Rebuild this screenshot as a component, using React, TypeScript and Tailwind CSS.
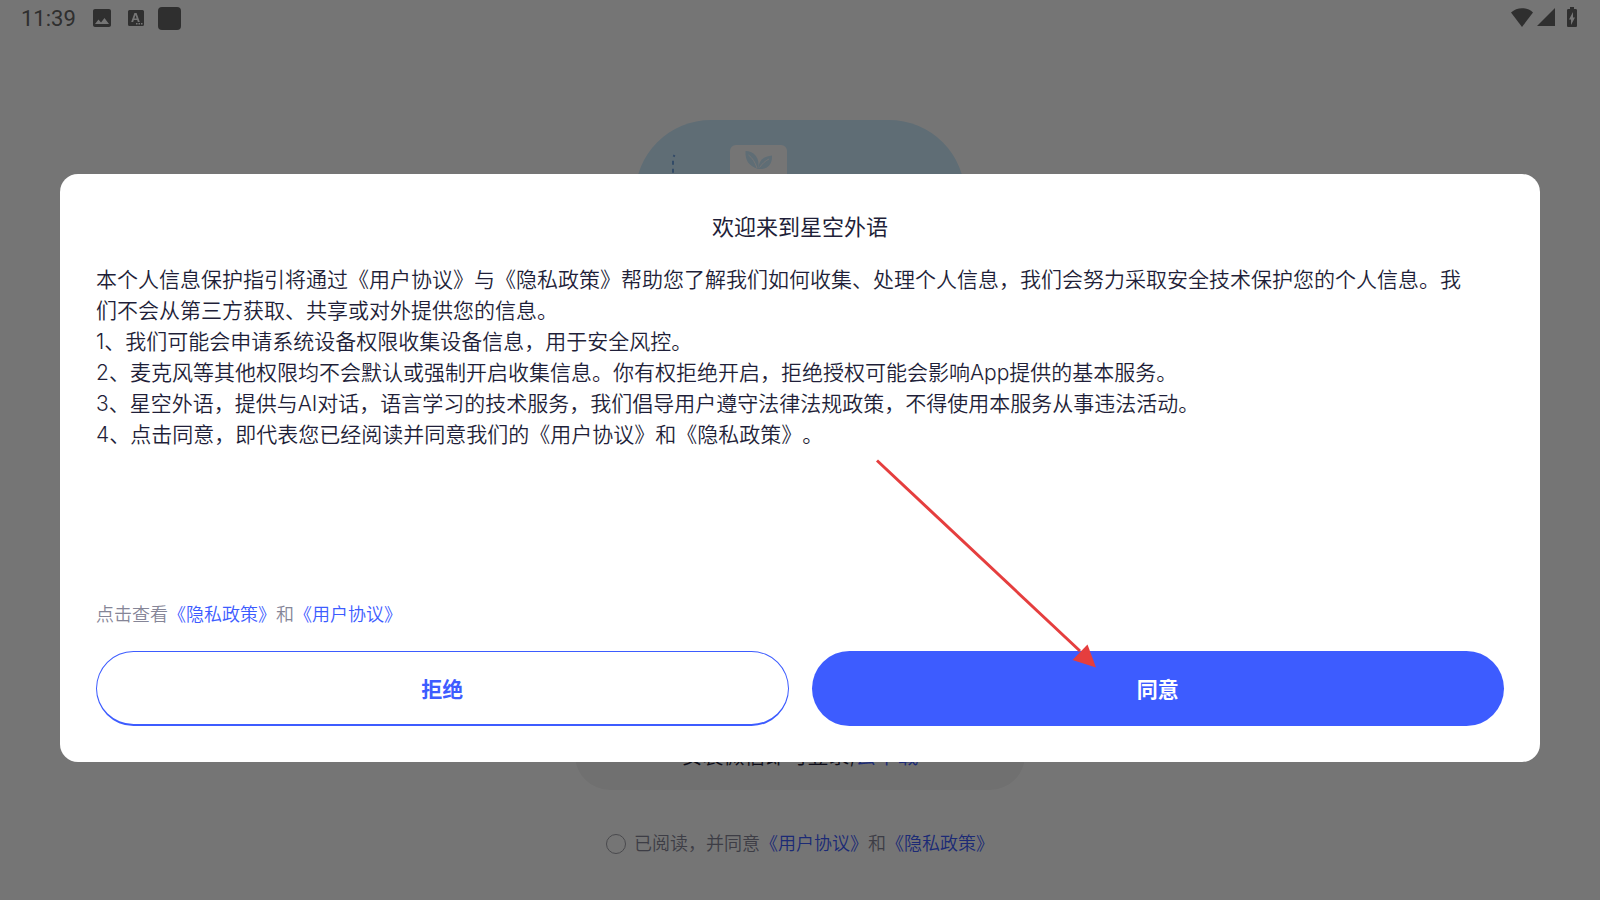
import { MdBatteryChargingFull, MdImage } from "react-icons/md";

const FONT = "font-[Inter,'Noto_Sans_CJK_SC',sans-serif]";

const guideLines = [
  "本个人信息保护指引将通过《用户协议》与《隐私政策》帮助您了解我们如何收集、处理个人信息，我们会努力采取安全技术保护您的个人信息。我们不会从第三方获取、共享或对外提供您的信息。",
  "1、我们可能会申请系统设备权限收集设备信息，用于安全风控。",
  "2、麦克风等其他权限均不会默认或强制开启收集信息。你有权拒绝开启，拒绝授权可能会影响App提供的基本服务。",
  "3、星空外语，提供与AI对话，语言学习的技术服务，我们倡导用户遵守法律法规政策，不得使用本服务从事违法活动。",
  "4、点击同意，即代表您已经阅读并同意我们的《用户协议》和《隐私政策》。",
];

function DocLink({ title }: { title: string }) {
  return (
    <a href="#" className="text-[#3d5cff]">
      {title}
    </a>
  );
}

function StatusBar() {
  return (
    <header className="flex h-9 items-center justify-between pl-[21px] pr-4 text-[#666666]">
      <div className="flex items-center">
        <span className="pt-[2px] font-[Roboto,sans-serif] text-[22px] leading-[34px]">
          11:39
        </span>
        <MdImage size={24} className="ml-[14px]" />
        <svg width="16" height="18" viewBox="0 0 16 18" className="ml-[14px]">
          <path
            fillRule="evenodd"
            fill="currentColor"
            d="M1.500 1h13A1.500 1.500 0 0 1 16 2.500v13a1.500 1.500 0 0 1-1.500 1.500h-13A1.500 1.500 0 0 1 0 15.500v-13A1.500 1.500 0 0 1 1.500 1ZM6.400 4 3.200 13h2l.6-1.900h3.400l.6 1.900h2L8.600 4Zm0 5.500L7.500 6l1.100 3.500ZM8 14v1.500h1.500V14Zm2.500 0v1.500H12V14Zm2.500 0v1.500h1.500V14Z"
          />
        </svg>
        <span className="ml-[14px] size-[23px] rounded bg-[#666666]" />
      </div>
      <div className="flex items-center pb-[2px]">
        <svg width="22" height="19" viewBox="0 0 22 19">
          <path fill="currentColor" d="M11 19 0 4.500C6-1.300 16-1.300 22 4.500Z" />
        </svg>
        <svg width="18" height="18" viewBox="0 0 18 18" className="ml-1">
          <path fill="currentColor" d="M18 0v18H0Z" />
        </svg>
        <MdBatteryChargingFull size={24} className="ml-[5px]" />
      </div>
    </header>
  );
}

function Illustration() {
  return (
    <svg width="330" height="330" viewBox="0 0 330 330" className="mx-auto">
      <rect width="330" height="330" rx="76" fill="#cfedff" />
      <path d="M39.500 35l-1.500 3v140" fill="none" stroke="#6fa3e0" strokeWidth="2" strokeDasharray="2 4 4 4 4 4" />
      <rect x="95" y="25" width="57" height="60" rx="6" fill="#ffffff" />
      <g fill="#cfedff">
        <path d="M123 49c-9-3-13-8-12.500-18C119 31 125.500 38 123 49Z" />
        <path d="M123 49c1-9 6-13 14-13.500C137.500 44 133 50 123 49Z" />
      </g>
      <g fill="none" stroke="#ffffff" strokeWidth="1">
        <path d="M113.500 35c4 3 6.500 7 8.500 13" />
        <path d="M124.500 47.500c3-4 5.500-6.500 9.500-8.500" />
      </g>
    </svg>
  );
}

function LoginPage() {
  return (
    <div className="flex min-h-screen flex-col bg-white">
      <StatusBar />
      <main className="flex flex-1 flex-col pt-[84px]">
        <Illustration />
        <div className="mx-auto mt-auto flex h-[70px] w-[450px] items-center justify-center rounded-full bg-[#f5f5f5] pt-[2px] text-[21px] font-[350] text-[#1f1f39]">
          安装微信即可登录,
          <a href="#" className="text-[#3d5cff]">
            去下载
          </a>
        </div>
        <div className="mt-10 mb-[43px] flex items-center justify-center gap-2 text-[18px] leading-[27px] font-[350] text-[#858597]">
          <input
            id="agree"
            type="checkbox"
            className="size-5 appearance-none rounded-full border border-[#a0a0a8]"
          />
          <p>
            <label htmlFor="agree">已阅读，并同意</label>
            <DocLink title="《用户协议》" />和<DocLink title="《隐私政策》" />
          </p>
        </div>
      </main>
    </div>
  );
}

function Pointer() {
  return (
    <svg
      width="222"
      height="212"
      viewBox="0 0 222 212"
      className="pointer-events-none absolute top-[284px] left-[55%]"
    >
      <path d="M3 2.500 206 193" stroke="#e53e3e" strokeWidth="3" />
      <path d="M222 209.500 198.500 202 213.500 186.500Z" fill="#e53e3e" />
    </svg>
  );
}

function WelcomeDialog() {
  return (
    <section
      role="dialog"
      aria-labelledby="welcome-title"
      className="relative w-full rounded-[18px] bg-white p-9 text-[#1f1f39]"
    >
      <h1 id="welcome-title" className="text-center text-[22px] leading-[34px]">
        欢迎来到星空外语
      </h1>
      <div className="mt-5 min-h-[337px] pr-8 text-[21px] leading-[31px] font-[350]">
        {guideLines.map((line) => (
          <p key={line}>{line}</p>
        ))}
      </div>
      <p className="text-[18px] leading-7 font-[350] text-[#858597]">
        点击查看
        <DocLink title="《隐私政策》" />和<DocLink title="《用户协议》" />
      </p>
      <div className="mt-[22px] grid grid-cols-2 gap-[23px] text-[21px] font-bold">
        <button className="h-[75px] rounded-full border border-b-2 border-[#3d5cff] pt-[3px] text-[#3d5cff]">
          拒绝
        </button>
        <button className="h-[75px] rounded-full bg-[#3d5cff] pt-[3px] text-white">
          同意
        </button>
      </div>
      <Pointer />
    </section>
  );
}

export default function App() {
  return (
    <div className={`relative [text-spacing-trim:space-all] ${FONT}`} lang="zh-CN">
      <LoginPage />
      <div className="absolute inset-0 flex items-center bg-black/54 px-[60px] pt-9">
        <WelcomeDialog />
      </div>
    </div>
  );
}
